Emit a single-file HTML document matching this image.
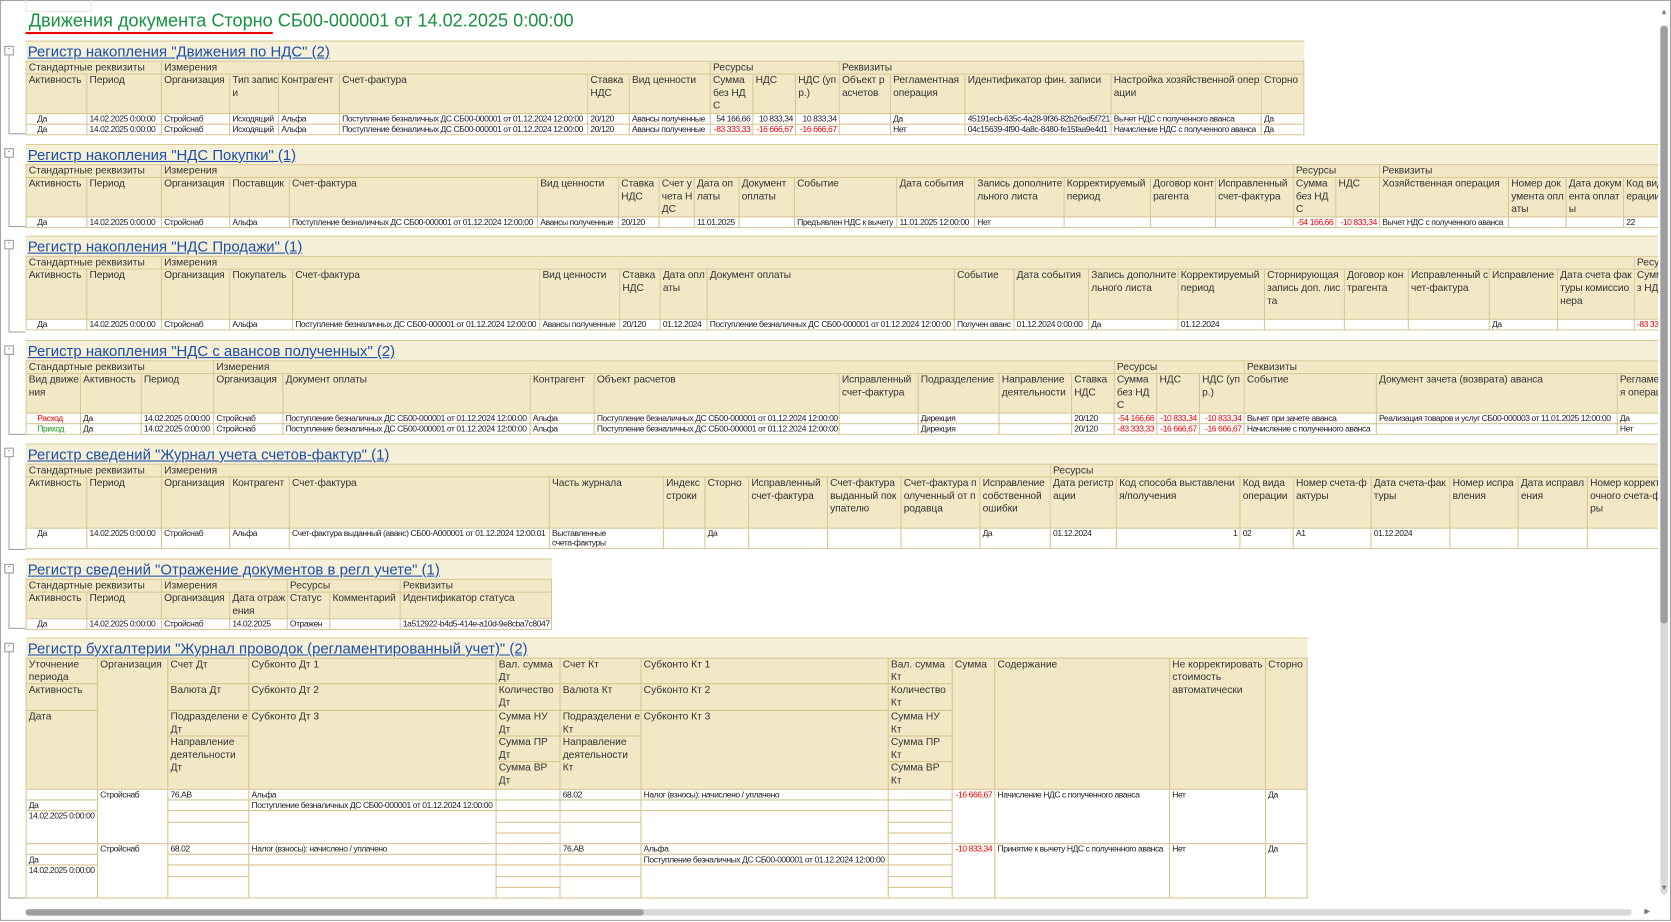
<!DOCTYPE html>
<html><head><meta charset="utf-8">
<style>
html,body{margin:0;padding:0;background:#fff;}
body{width:1671px;height:922px;overflow:hidden;position:relative;font-family:"Liberation Sans",Arial,sans-serif;}
#w{position:absolute;left:0;top:0;width:1568px;height:865px;transform-origin:0 0;transform:scale(1.0657,1.0659);}
.frame{position:absolute;left:0;top:0;width:1566px;height:862px;border:1px solid #a5a5a5;}
.tab{position:absolute;left:24px;top:0;width:60px;height:10px;border:1px solid #e6e6e6;border-top:none;}
.title{position:absolute;left:27px;top:10px;font-size:17px;color:#1a9140;white-space:nowrap;}
.uline{position:absolute;left:24px;top:30px;width:232px;height:2px;background:#e00;}
.sec{position:absolute;left:24px;overflow:hidden;}
.ttl{height:18px;background:#f7f0d9;border-top:1px solid #d9ca94;font-size:14px;line-height:18px;padding-left:2px;white-space:nowrap;}
.ttl span{color:#1c4fa9;text-decoration:underline;}
table{border-collapse:collapse;table-layout:fixed;}
td{border:1px solid #d6c690;padding:0 0 0 2px;vertical-align:top;overflow:hidden;box-sizing:border-box;}
.g td{height:11px;background:#f2e8c5;font-size:9.6px;line-height:11px;white-space:nowrap;color:#333;}
.h td{background:#f2e8c5;font-size:9.6px;line-height:12px;color:#333;word-break:break-all;letter-spacing:-0.1px;}
.d td{background:#fff;font-size:8px;line-height:9px;height:9px;white-space:nowrap;letter-spacing:-0.4px;color:#222;}
.d td.c{padding-left:10px;}
.r{text-align:right;padding-right:2px!important;}
.neg{color:#e00!important;}
.grn{color:#1a9a1a!important;}
.box{position:absolute;left:4px;width:7px;height:7px;border:1px solid #999;background:#fff;font-size:7px;line-height:6px;text-align:center;color:#555;}
.vl{position:absolute;left:8px;width:1px;background:#a0a0a0;}
.hl{position:absolute;left:8px;width:16px;height:1px;background:#a0a0a0;}
.a{position:absolute;box-sizing:border-box;border:1px solid #d6c690;font-size:9.6px;line-height:12px;padding-left:2px;color:#333;overflow:hidden;}
.hb{background:#f2e8c5;}
.db{background:#fff;font-size:8px;line-height:9px;letter-spacing:-0.4px;white-space:nowrap;color:#222;}
.vs{position:absolute;left:1558px;top:24px;width:7px;height:815px;background:#d9d9d9;border-radius:4px;}
.vt{position:absolute;left:1558px;top:24px;width:7px;height:561px;background:#9e9e9e;border-radius:4px;}
.hs{position:absolute;left:24px;top:853px;width:1507px;height:6px;background:#d9d9d9;border-radius:3px;}
.ht{position:absolute;left:24px;top:853px;width:580px;height:6px;background:#9e9e9e;border-radius:3px;}
.ar{position:absolute;font-size:7px;color:#777;}
</style></head><body><div id="w">
<div class="frame"></div>
<div class="tab"></div>
<div class="title">Движения документа Сторно СБ00-000001 от 14.02.2025 0:00:00</div>
<div class="uline"></div>

<div class="box" style="top:43px">-</div><div class="vl" style="top:52px;height:73px"></div><div class="hl" style="top:125px"></div>
<div class="box" style="top:139px">-</div><div class="vl" style="top:148px;height:64px"></div><div class="hl" style="top:212px"></div>
<div class="box" style="top:225px">-</div><div class="vl" style="top:234px;height:77px"></div><div class="hl" style="top:311px"></div>
<div class="box" style="top:324px">-</div><div class="vl" style="top:333px;height:74px"></div><div class="hl" style="top:407px"></div>
<div class="box" style="top:420px">-</div><div class="vl" style="top:429px;height:86px"></div><div class="hl" style="top:515px"></div>
<div class="box" style="top:529px">-</div><div class="vl" style="top:538px;height:51px"></div><div class="hl" style="top:589px"></div>
<div class="box" style="top:603px">-</div><div class="vl" style="top:612px;height:230px"></div><div class="hl" style="top:842px"></div>

<div class="sec" style="top:38px;width:1200px">
<div class="ttl"><span>Регистр накопления "Движения по НДС" (2)</span></div>
<table style="width:1199px">
<colgroup><col style="width:57px"><col style="width:70px"><col style="width:64px"><col style="width:46px"><col style="width:57px"><col style="width:233px"><col style="width:39px"><col style="width:76px"><col style="width:40px"><col style="width:40px"><col style="width:41px"><col style="width:48px"><col style="width:70px"><col style="width:137px"><col style="width:141px"><col style="width:40px"></colgroup>
<tr class="g"><td colspan="2">Стандартные реквизиты</td><td colspan="6">Измерения</td><td colspan="3">Ресурсы</td><td colspan="5">Реквизиты</td></tr>
<tr class="h" style="height:36px"><td>Активность</td><td>Период</td><td>Организация</td><td>Тип записи</td><td>Контрагент</td><td>Счет-фактура</td><td>Ставка НДС</td><td>Вид ценности</td><td>Сумма без НДС</td><td>НДС</td><td>НДС (упр.)</td><td>Объект расчетов</td><td>Регламентная операция</td><td>Идентификатор фин. записи</td><td>Настройка хозяйственной операции</td><td>Сторно</td></tr>
<tr class="d"><td class="c">Да</td><td>14.02.2025 0:00:00</td><td>Стройснаб</td><td>Исходящий</td><td>Альфа</td><td>Поступление безналичных ДС СБ00-000001 от 01.12.2024 12:00:00</td><td>20/120</td><td>Авансы полученные</td><td class="r">54 166,66</td><td class="r">10 833,34</td><td class="r">10 833,34</td><td></td><td>Да</td><td>45191ecb-635c-4a28-9f36-82b26ed5f721</td><td>Вычет НДС с полученного аванса</td><td>Да</td></tr>
<tr class="d"><td class="c">Да</td><td>14.02.2025 0:00:00</td><td>Стройснаб</td><td>Исходящий</td><td>Альфа</td><td>Поступление безналичных ДС СБ00-000001 от 01.12.2024 12:00:00</td><td>20/120</td><td>Авансы полученные</td><td class="r neg">-83 333,33</td><td class="r neg">-16 666,67</td><td class="r neg">-16 666,67</td><td></td><td>Нет</td><td>04c15639-4f90-4a8c-8480-fe15faa9e4d1</td><td>Начисление НДС с полученного аванса</td><td>Да</td></tr>
</table></div>

<div class="sec" style="top:135px;width:1532px">
<div class="ttl"><span>Регистр накопления "НДС Покупки" (1)</span></div>
<table style="width:1556px">
<colgroup><col style="width:57px"><col style="width:70px"><col style="width:64px"><col style="width:56px"><col style="width:233px"><col style="width:76px"><col style="width:38px"><col style="width:33px"><col style="width:42px"><col style="width:52px"><col style="width:96px"><col style="width:73px"><col style="width:84px"><col style="width:81px"><col style="width:61px"><col style="width:73px"><col style="width:40px"><col style="width:41px"><col style="width:121px"><col style="width:54px"><col style="width:54px"><col style="width:57px"></colgroup>
<tr class="g"><td colspan="2">Стандартные реквизиты</td><td colspan="14">Измерения</td><td colspan="2">Ресурсы</td><td colspan="4">Реквизиты</td></tr>
<tr class="h" style="height:36px"><td>Активность</td><td>Период</td><td>Организация</td><td>Поставщик</td><td>Счет-фактура</td><td>Вид ценности</td><td>Ставка НДС</td><td>Счет учета НДС</td><td>Дата оплаты</td><td>Документ оплаты</td><td>Событие</td><td>Дата события</td><td>Запись дополнительного листа</td><td>Корректируемый период</td><td>Договор контрагента</td><td>Исправленный счет-фактура</td><td>Сумма без НДС</td><td>НДС</td><td>Хозяйственная операция</td><td>Номер документа оплаты</td><td>Дата документа оплаты</td><td>Код вида операции</td></tr>
<tr class="d"><td class="c">Да</td><td>14.02.2025 0:00:00</td><td>Стройснаб</td><td>Альфа</td><td>Поступление безналичных ДС СБ00-000001 от 01.12.2024 12:00:00</td><td>Авансы полученные</td><td>20/120</td><td></td><td>11.01.2025</td><td></td><td>Предъявлен НДС к вычету</td><td>11.01.2025 12:00:00</td><td>Нет</td><td></td><td></td><td></td><td class="r neg">-54 166,66</td><td class="r neg">-10 833,34</td><td>Вычет НДС с полученного аванса</td><td></td><td></td><td>22</td></tr>
</table></div>

<div class="sec" style="top:221px;width:1532px">
<div class="ttl"><span>Регистр накопления "НДС Продажи" (1)</span></div>
<table style="width:1556px">
<colgroup><col style="width:57px"><col style="width:70px"><col style="width:64px"><col style="width:59px"><col style="width:232px"><col style="width:75px"><col style="width:38px"><col style="width:44px"><col style="width:232px"><col style="width:56px"><col style="width:70px"><col style="width:84px"><col style="width:81px"><col style="width:75px"><col style="width:60px"><col style="width:76px"><col style="width:64px"><col style="width:72px"><col style="width:47px"></colgroup>
<tr class="g"><td colspan="2">Стандартные реквизиты</td><td colspan="16">Измерения</td><td>Ресурсы</td></tr>
<tr class="h" style="height:47px"><td>Активность</td><td>Период</td><td>Организация</td><td>Покупатель</td><td>Счет-фактура</td><td>Вид ценности</td><td>Ставка НДС</td><td>Дата оплаты</td><td>Документ оплаты</td><td>Событие</td><td>Дата события</td><td>Запись дополнительного листа</td><td>Корректируемый период</td><td>Сторнирующая запись доп. листа</td><td>Договор контрагента</td><td>Исправленный счет-фактура</td><td>Исправление</td><td>Дата счета фактуры комиссионера</td><td>Сумма без НДС</td></tr>
<tr class="d"><td class="c">Да</td><td>14.02.2025 0:00:00</td><td>Стройснаб</td><td>Альфа</td><td>Поступление безналичных ДС СБ00-000001 от 01.12.2024 12:00:00</td><td>Авансы полученные</td><td>20/120</td><td>01.12.2024</td><td>Поступление безналичных ДС СБ00-000001 от 01.12.2024 12:00:00</td><td>Получен аванс</td><td>01.12.2024 0:00:00</td><td>Да</td><td>01.12.2024</td><td></td><td></td><td></td><td>Да</td><td></td><td class="neg">-83 333,33</td></tr>
</table></div>

<div class="sec" style="top:319px;width:1532px">
<div class="ttl"><span>Регистр накопления "НДС с авансов полученных" (2)</span></div>
<table style="width:1556px">
<colgroup><col style="width:51px"><col style="width:57px"><col style="width:68px"><col style="width:65px"><col style="width:232px"><col style="width:60px"><col style="width:230px"><col style="width:74px"><col style="width:76px"><col style="width:68px"><col style="width:40px"><col style="width:40px"><col style="width:40px"><col style="width:42px"><col style="width:124px"><col style="width:226px"><col style="width:63px"></colgroup>
<tr class="g"><td colspan="3">Стандартные реквизиты</td><td colspan="8">Измерения</td><td colspan="3">Ресурсы</td><td colspan="3">Реквизиты</td></tr>
<tr class="h" style="height:37px"><td>Вид движения</td><td>Активность</td><td>Период</td><td>Организация</td><td>Документ оплаты</td><td>Контрагент</td><td>Объект расчетов</td><td>Исправленный счет-фактура</td><td>Подразделение</td><td>Направление деятельности</td><td>Ставка НДС</td><td>Сумма без НДС</td><td>НДС</td><td>НДС (упр.)</td><td>Событие</td><td>Документ зачета (возврата) аванса</td><td>Регламентная операция</td></tr>
<tr class="d"><td class="c neg">Расход</td><td>Да</td><td>14.02.2025 0:00:00</td><td>Стройснаб</td><td>Поступление безналичных ДС СБ00-000001 от 01.12.2024 12:00:00</td><td>Альфа</td><td>Поступление безналичных ДС СБ00-000001 от 01.12.2024 12:00:00</td><td></td><td>Дирекция</td><td></td><td>20/120</td><td class="r neg">-54 166,66</td><td class="r neg">-10 833,34</td><td class="r neg">-10 833,34</td><td>Вычет при зачете аванса</td><td>Реализация товаров и услуг СБ00-000003 от 11.01.2025 12:00:00</td><td>Да</td></tr>
<tr class="d"><td class="c grn">Приход</td><td>Да</td><td>14.02.2025 0:00:00</td><td>Стройснаб</td><td>Поступление безналичных ДС СБ00-000001 от 01.12.2024 12:00:00</td><td>Альфа</td><td>Поступление безналичных ДС СБ00-000001 от 01.12.2024 12:00:00</td><td></td><td>Дирекция</td><td></td><td>20/120</td><td class="r neg">-83 333,33</td><td class="r neg">-16 666,67</td><td class="r neg">-16 666,67</td><td>Начисление с полученного аванса</td><td></td><td>Нет</td></tr>
</table></div>

<div class="sec" style="top:416px;width:1532px">
<div class="ttl"><span>Регистр сведений "Журнал учета счетов-фактур" (1)</span></div>
<table style="width:1556px">
<colgroup><col style="width:57px"><col style="width:70px"><col style="width:64px"><col style="width:56px"><col style="width:244px"><col style="width:107px"><col style="width:39px"><col style="width:41px"><col style="width:74px"><col style="width:69px"><col style="width:74px"><col style="width:66px"><col style="width:62px"><col style="width:116px"><col style="width:50px"><col style="width:73px"><col style="width:74px"><col style="width:64px"><col style="width:65px"><col style="width:91px"></colgroup>
<tr class="g"><td colspan="2">Стандартные реквизиты</td><td colspan="10">Измерения</td><td colspan="8">Ресурсы</td></tr>
<tr class="h" style="height:48px"><td>Активность</td><td>Период</td><td>Организация</td><td>Контрагент</td><td>Счет-фактура</td><td>Часть журнала</td><td>Индекс строки</td><td>Сторно</td><td>Исправленный счет-фактура</td><td>Счет-фактура выданный покупателю</td><td>Счет-фактура полученный от продавца</td><td>Исправление собственной ошибки</td><td>Дата регистрации</td><td>Код способа выставления/получения</td><td>Код вида операции</td><td>Номер счета-фактуры</td><td>Дата счета-фактуры</td><td>Номер исправления</td><td>Дата исправления</td><td>Номер корректировочного счета-фактуры</td></tr>
<tr class="d" style="height:19px"><td class="c">Да</td><td>14.02.2025 0:00:00</td><td>Стройснаб</td><td>Альфа</td><td>Счет-фактура выданный (аванс) СБ00-А000001 от 01.12.2024 12:00:01</td><td style="white-space:normal;width:60px">Выставленные<br>счета-фактуры</td><td></td><td>Да</td><td></td><td></td><td></td><td>Да</td><td>01.12.2024</td><td class="r">1</td><td>02</td><td>А1</td><td>01.12.2024</td><td></td><td></td><td></td></tr>
</table></div>

<div class="sec" style="top:524px;width:494px">
<div class="ttl"><span>Регистр сведений "Отражение документов в регл учете" (1)</span></div>
<table style="width:493px">
<colgroup><col style="width:57px"><col style="width:70px"><col style="width:64px"><col style="width:54px"><col style="width:40px"><col style="width:66px"><col style="width:142px"></colgroup>
<tr class="g"><td colspan="2">Стандартные реквизиты</td><td colspan="2">Измерения</td><td colspan="2">Ресурсы</td><td>Реквизиты</td></tr>
<tr class="h" style="height:24px"><td>Активность</td><td>Период</td><td>Организация</td><td>Дата отражения</td><td>Статус</td><td>Комментарий</td><td>Идентификатор статуса</td></tr>
<tr class="d"><td class="c">Да</td><td>14.02.2025 0:00:00</td><td>Стройснаб</td><td>14.02.2025</td><td>Отражен</td><td></td><td>1a512922-b4d5-414e-a10d-9e8cba7c8047</td></tr>
</table></div>

<div class="sec" style="top:598px;width:1204px;height:246px">
<div class="ttl" style="width:1201px"><span>Регистр бухгалтерии "Журнал проводок (регламентированный учет)" (2)</span></div>
<div style="position:absolute;left:0;top:19px;width:1204px;height:226px">
<div class="a hb" style="left:0;top:0;width:68px;height:25px">Уточнение периода</div>
<div class="a hb" style="left:0;top:24px;width:68px;height:26px">Активность</div>
<div class="a hb" style="left:0;top:49px;width:68px;height:75px">Дата</div>
<div class="a hb" style="left:67px;top:0;width:67px;height:124px">Организация</div>
<div class="a hb" style="left:133px;top:0;width:77px;height:25px">Счет Дт</div>
<div class="a hb" style="left:133px;top:24px;width:77px;height:26px">Валюта Дт</div>
<div class="a hb" style="left:133px;top:49px;width:77px;height:25px">Подразделени е Дт</div>
<div class="a hb" style="left:133px;top:73px;width:77px;height:51px">Направление деятельности Дт</div>
<div class="a hb" style="left:209px;top:0;width:233px;height:25px">Субконто Дт 1</div>
<div class="a hb" style="left:209px;top:24px;width:233px;height:26px">Субконто Дт 2</div>
<div class="a hb" style="left:209px;top:49px;width:233px;height:75px">Субконто Дт 3</div>
<div class="a hb" style="left:441px;top:0;width:61px;height:25px">Вал. сумма Дт</div>
<div class="a hb" style="left:441px;top:24px;width:61px;height:26px">Количество Дт</div>
<div class="a hb" style="left:441px;top:49px;width:61px;height:25px">Сумма НУ Дт</div>
<div class="a hb" style="left:441px;top:73px;width:61px;height:25px">Сумма ПР Дт</div>
<div class="a hb" style="left:441px;top:97px;width:61px;height:27px">Сумма ВР Дт</div>
<div class="a hb" style="left:501px;top:0;width:77px;height:25px">Счет Кт</div>
<div class="a hb" style="left:501px;top:24px;width:77px;height:26px">Валюта Кт</div>
<div class="a hb" style="left:501px;top:49px;width:77px;height:25px">Подразделени е Кт</div>
<div class="a hb" style="left:501px;top:73px;width:77px;height:51px">Направление деятельности Кт</div>
<div class="a hb" style="left:577px;top:0;width:233px;height:25px">Субконто Кт 1</div>
<div class="a hb" style="left:577px;top:24px;width:233px;height:26px">Субконто Кт 2</div>
<div class="a hb" style="left:577px;top:49px;width:233px;height:75px">Субконто Кт 3</div>
<div class="a hb" style="left:809px;top:0;width:61px;height:25px">Вал. сумма Кт</div>
<div class="a hb" style="left:809px;top:24px;width:61px;height:26px">Количество Кт</div>
<div class="a hb" style="left:809px;top:49px;width:61px;height:25px">Сумма НУ Кт</div>
<div class="a hb" style="left:809px;top:73px;width:61px;height:25px">Сумма ПР Кт</div>
<div class="a hb" style="left:809px;top:97px;width:61px;height:27px">Сумма ВР Кт</div>
<div class="a hb" style="left:869px;top:0;width:41px;height:124px">Сумма</div>
<div class="a hb" style="left:909px;top:0;width:165px;height:124px">Содержание</div>
<div class="a hb" style="left:1073px;top:0;width:91px;height:124px">Не корректировать стоимость автоматически</div>
<div class="a hb" style="left:1163px;top:0;width:40px;height:124px">Сторно</div>
<div class="a db" style="left:0;top:123px;width:68px;height:11px"></div>
<div class="a db" style="left:0;top:133px;width:68px;height:11px">Да</div>
<div class="a db" style="left:0;top:143px;width:68px;height:32px">14.02.2025 0:00:00</div>
<div class="a db" style="left:67px;top:123px;width:67px;height:52px">Стройснаб</div>
<div class="a db" style="left:133px;top:123px;width:77px;height:11px">76.АВ</div>
<div class="a db" style="left:133px;top:133px;width:77px;height:11px"></div>
<div class="a db" style="left:133px;top:143px;width:77px;height:12px"></div>
<div class="a db" style="left:133px;top:154px;width:77px;height:21px"></div>
<div class="a db" style="left:209px;top:123px;width:233px;height:11px">Альфа</div>
<div class="a db" style="left:209px;top:133px;width:233px;height:11px">Поступление безналичных ДС СБ00-000001 от 01.12.2024 12:00:00</div>
<div class="a db" style="left:209px;top:143px;width:233px;height:32px"></div>
<div class="a db" style="left:441px;top:123px;width:61px;height:11px"></div>
<div class="a db" style="left:441px;top:133px;width:61px;height:11px"></div>
<div class="a db" style="left:441px;top:143px;width:61px;height:12px"></div>
<div class="a db" style="left:441px;top:154px;width:61px;height:11px"></div>
<div class="a db" style="left:441px;top:164px;width:61px;height:11px"></div>
<div class="a db" style="left:501px;top:123px;width:77px;height:11px">68.02</div>
<div class="a db" style="left:501px;top:133px;width:77px;height:11px"></div>
<div class="a db" style="left:501px;top:143px;width:77px;height:12px"></div>
<div class="a db" style="left:501px;top:154px;width:77px;height:21px"></div>
<div class="a db" style="left:577px;top:123px;width:233px;height:11px">Налог (взносы): начислено / уплачено</div>
<div class="a db" style="left:577px;top:133px;width:233px;height:11px"></div>
<div class="a db" style="left:577px;top:143px;width:233px;height:32px"></div>
<div class="a db" style="left:809px;top:123px;width:61px;height:11px"></div>
<div class="a db" style="left:809px;top:133px;width:61px;height:11px"></div>
<div class="a db" style="left:809px;top:143px;width:61px;height:12px"></div>
<div class="a db" style="left:809px;top:154px;width:61px;height:11px"></div>
<div class="a db" style="left:809px;top:164px;width:61px;height:11px"></div>
<div class="a db neg" style="left:869px;top:123px;width:41px;height:52px;text-align:right;padding-right:2px">-16 666,67</div>
<div class="a db" style="left:909px;top:123px;width:165px;height:52px">Начисление НДС с полученного аванса</div>
<div class="a db" style="left:1073px;top:123px;width:91px;height:52px">Нет</div>
<div class="a db" style="left:1163px;top:123px;width:40px;height:52px">Да</div>
<div class="a db" style="left:0;top:174px;width:68px;height:11px"></div>
<div class="a db" style="left:0;top:184px;width:68px;height:11px">Да</div>
<div class="a db" style="left:0;top:194px;width:68px;height:32px">14.02.2025 0:00:00</div>
<div class="a db" style="left:67px;top:174px;width:67px;height:52px">Стройснаб</div>
<div class="a db" style="left:133px;top:174px;width:77px;height:11px">68.02</div>
<div class="a db" style="left:133px;top:184px;width:77px;height:11px"></div>
<div class="a db" style="left:133px;top:194px;width:77px;height:12px"></div>
<div class="a db" style="left:133px;top:205px;width:77px;height:21px"></div>
<div class="a db" style="left:209px;top:174px;width:233px;height:11px">Налог (взносы): начислено / уплачено</div>
<div class="a db" style="left:209px;top:184px;width:233px;height:11px"></div>
<div class="a db" style="left:209px;top:194px;width:233px;height:32px"></div>
<div class="a db" style="left:441px;top:174px;width:61px;height:11px"></div>
<div class="a db" style="left:441px;top:184px;width:61px;height:11px"></div>
<div class="a db" style="left:441px;top:194px;width:61px;height:12px"></div>
<div class="a db" style="left:441px;top:205px;width:61px;height:11px"></div>
<div class="a db" style="left:441px;top:215px;width:61px;height:11px"></div>
<div class="a db" style="left:501px;top:174px;width:77px;height:11px">76.АВ</div>
<div class="a db" style="left:501px;top:184px;width:77px;height:11px"></div>
<div class="a db" style="left:501px;top:194px;width:77px;height:12px"></div>
<div class="a db" style="left:501px;top:205px;width:77px;height:21px"></div>
<div class="a db" style="left:577px;top:174px;width:233px;height:11px">Альфа</div>
<div class="a db" style="left:577px;top:184px;width:233px;height:11px">Поступление безналичных ДС СБ00-000001 от 01.12.2024 12:00:00</div>
<div class="a db" style="left:577px;top:194px;width:233px;height:32px"></div>
<div class="a db" style="left:809px;top:174px;width:61px;height:11px"></div>
<div class="a db" style="left:809px;top:184px;width:61px;height:11px"></div>
<div class="a db" style="left:809px;top:194px;width:61px;height:12px"></div>
<div class="a db" style="left:809px;top:205px;width:61px;height:11px"></div>
<div class="a db" style="left:809px;top:215px;width:61px;height:11px"></div>
<div class="a db neg" style="left:869px;top:174px;width:41px;height:52px;text-align:right;padding-right:2px">-10 833,34</div>
<div class="a db" style="left:909px;top:174px;width:165px;height:52px">Принятие к вычету НДС с полученного аванса</div>
<div class="a db" style="left:1073px;top:174px;width:91px;height:52px">Нет</div>
<div class="a db" style="left:1163px;top:174px;width:40px;height:52px">Да</div>
</div></div>

<div class="vs"></div><div class="vt"></div>
<div class="ar" style="left:1558px;top:8px">▲</div>
<div class="ar" style="left:1558px;top:830px">▼</div>
<div class="hs"></div><div class="ht"></div>
<div class="ar" style="left:1543px;top:851px">▶</div>
</div></body></html>
